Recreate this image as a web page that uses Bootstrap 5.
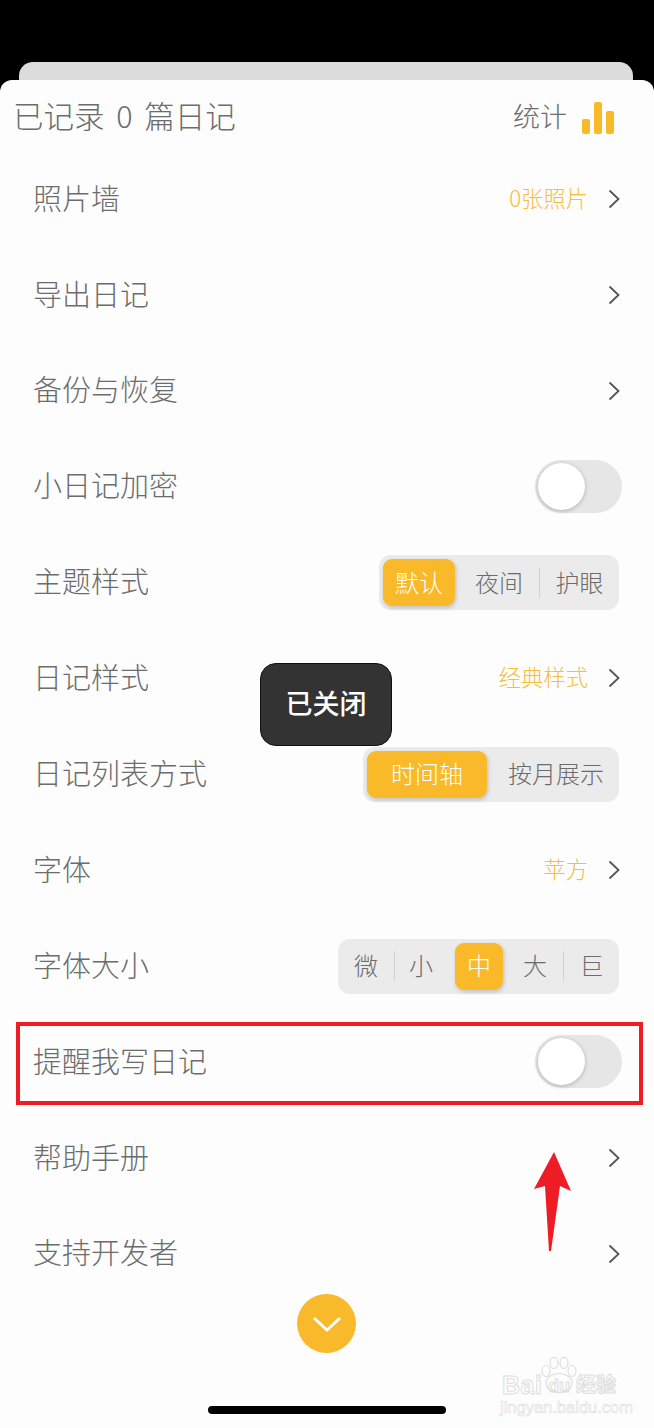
<!DOCTYPE html>
<html lang="zh-CN">
<head>
  <meta charset="UTF-8">
  <title>设置</title>
  <meta name="viewport" content="width=device-width, initial-scale=1">
  <link href="https://cdn.jsdelivr.net/npm/bootstrap@5.3.3/dist/css/bootstrap.min.css" rel="stylesheet">
  <style>
    body {
      background-color: #000;
      font-family: "Noto Sans CJK SC", "Liberation Sans", sans-serif;
      font-weight: 300;
      color: #6c6c6c;
      overflow: hidden;
    }
    .screen {
      position: relative;
      width: 654px;
      height: 1428px;
      padding-top: 62px;
      overflow: hidden;
    }
    .peek-card {
      height: 30px;
      margin: 0 21px -12px 19px;
      background: #dcdcdc;
      border-radius: 14px 14px 0 0;
    }
    .sheet {
      position: relative;
      height: 1348px;
      background: #fdfdfd;
      border-radius: 12px 12px 0 0;
    }
    .sheet-head {
      height: 71px;
      padding: 0 40px 0 13px;
    }
    .head-title { font-size: 30.5px; word-spacing: 5px; }
    .head-stats { font-size: 27px; margin-right: 15px; padding-top: 2px; }
    .stat-bars { height: 32px; gap: 4px; margin-top: 5px; }
    .stat-bars span { width: 8px; background: #f9b928; border-radius: 2px; }
    .bar-a { height: 15px; }
    .bar-b { height: 32px; }
    .bar-c { height: 23px; }
    .set-row {
      height: 95.9px;
      padding: 0 32px 0 33px;
      font-size: 29px;
    }
    .set-label { padding-bottom: 3px; }
    .set-value { font-size: 22.3px; color: #f5bd3a; margin-right: 20px; padding-bottom: 3px; }
    .chev { width: 12px; height: 20px; display: block; margin-right: 2px; }
    .seg {
      height: 55px;
      padding: 4px;
      margin-right: 3px;
      background: #ebebeb;
      border-radius: 12px;
      font-size: 24px;
    }
    .seg-item { height: 100%; padding-bottom: 2px; flex: none; }
    .seg-on {
      background: #f9b928;
      color: #fff;
      border-radius: 9px;
      box-shadow: 1px 2px 4px rgba(0,0,0,.18);
    }
    .sw-72 { width: 72px; }
    .sw-84 { width: 84px; padding-left: 4px; }
    .sw-75 { width: 75px; padding-left: 4px; }
    .sw-120 { width: 120px; }
    .sw-128 { width: 128px; padding-left: 10px; }
    .sw-48 { width: 48px; }
    .sw-52 { width: 52px; padding-right: 4px; }
    .sw-60a { width: 60px; padding-right: 8px; }
    .sw-60b { width: 60px; padding-left: 4px; }
    .sw-51 { width: 51px; padding-left: 4px; }
    .seg-tick { width: 1px; height: 30px; background: #d2d2d2; flex: none; }
    .switch-off {
      width: 87px;
      height: 53px;
      padding: 3px;
      margin-bottom: 1px;
      background: #e6e6e6;
      border-radius: 27px;
    }
    .switch-off i {
      display: block;
      width: 47px;
      height: 47px;
      background: #fff;
      border-radius: 50%;
      box-shadow: 0 1px 4px rgba(0,0,0,.25);
    }
    .toast-box {
      position: absolute;
      left: 260px;
      top: 663px;
      width: 132px;
      height: 83px;
      padding-bottom: 3px;
      background: #333;
      border: 1px solid #111;
      border-radius: 16px;
      color: #fff;
      font-size: 27px;
      font-weight: 500;
    }
    .red-frame {
      position: absolute;
      left: 16px;
      top: 1022px;
      width: 627px;
      height: 83px;
      border: 4px solid #ee1c25;
    }
    .red-arrow { position: absolute; left: 530px; top: 1148px; }
    .down-btn {
      position: absolute;
      left: 297px;
      top: 1294px;
      width: 59px;
      height: 59px;
      background: #f8b92a;
      border-radius: 50%;
    }
    .home-bar {
      position: absolute;
      left: 208px;
      top: 1406px;
      width: 238px;
      height: 8px;
      background: #000;
      border-radius: 4px;
    }
    .mark-box {
      position: absolute;
      left: 500px;
      top: 1355px;
      width: 120px;
      height: 62px;
      color: transparent;
      -webkit-text-stroke: 1px #dedede;
      font-family: "Liberation Sans", "Noto Sans CJK SC", sans-serif;
      font-weight: 700;
      line-height: 1;
    }
    .mark-box svg { position: absolute; left: 41px; top: 2px; }
    .mark-box span { position: absolute; white-space: nowrap; }
    .mark-bai { left: 2px; top: 18px; font-size: 25px; letter-spacing: .5px; }
    .mark-du { left: 48px; top: 22px; font-size: 18px; }
    .mark-zh { left: 76px; top: 20px; font-size: 20px; }
    .mark-sub { left: 0; top: 44px; font-size: 16.5px; font-weight: 400; -webkit-text-stroke: .6px #dedede; }
  </style>
</head>
<body>
  <div class="screen">
    <div class="peek-card"></div>
    <div class="sheet">
      <div class="sheet-head d-flex justify-content-between align-items-center">
        <div class="head-title">已记录 0 篇日记</div>
        <div class="d-flex align-items-center">
          <span class="head-stats">统计</span>
          <div class="stat-bars d-flex align-items-end">
            <span class="bar-a"></span><span class="bar-b"></span><span class="bar-c"></span>
          </div>
        </div>
      </div>

      <div class="set-row d-flex justify-content-between align-items-center">
        <span class="set-label">照片墙</span>
        <div class="d-flex align-items-center"><span class="set-value">0张照片</span>
          <svg class="chev" viewBox="0 0 12 20"><path d="M1.5 1.5 10.5 10 1.5 18.5" fill="none" stroke="#555" stroke-width="1.8"/></svg></div>
      </div>
      <div class="set-row d-flex justify-content-between align-items-center">
        <span class="set-label">导出日记</span>
        <svg class="chev" viewBox="0 0 12 20"><path d="M1.5 1.5 10.5 10 1.5 18.5" fill="none" stroke="#555" stroke-width="1.8"/></svg>
      </div>
      <div class="set-row d-flex justify-content-between align-items-center">
        <span class="set-label">备份与恢复</span>
        <svg class="chev" viewBox="0 0 12 20"><path d="M1.5 1.5 10.5 10 1.5 18.5" fill="none" stroke="#555" stroke-width="1.8"/></svg>
      </div>
      <div class="set-row d-flex justify-content-between align-items-center">
        <span class="set-label">小日记加密</span>
        <div class="switch-off"><i></i></div>
      </div>
      <div class="set-row d-flex justify-content-between align-items-center">
        <span class="set-label">主题样式</span>
        <div class="seg d-flex align-items-center">
          <div class="seg-item seg-on sw-72 d-flex align-items-center justify-content-center">默认</div>
          <div class="seg-item sw-84 d-flex align-items-center justify-content-center">夜间</div>
          <span class="seg-tick"></span>
          <div class="seg-item sw-75 d-flex align-items-center justify-content-center">护眼</div>
        </div>
      </div>
      <div class="set-row d-flex justify-content-between align-items-center">
        <span class="set-label">日记样式</span>
        <div class="d-flex align-items-center"><span class="set-value">经典样式</span>
          <svg class="chev" viewBox="0 0 12 20"><path d="M1.5 1.5 10.5 10 1.5 18.5" fill="none" stroke="#555" stroke-width="1.8"/></svg></div>
      </div>
      <div class="set-row d-flex justify-content-between align-items-center">
        <span class="set-label">日记列表方式</span>
        <div class="seg d-flex align-items-center">
          <div class="seg-item seg-on sw-120 d-flex align-items-center justify-content-center">时间轴</div>
          <div class="seg-item sw-128 d-flex align-items-center justify-content-center">按月展示</div>
        </div>
      </div>
      <div class="set-row d-flex justify-content-between align-items-center">
        <span class="set-label">字体</span>
        <div class="d-flex align-items-center"><span class="set-value">苹方</span>
          <svg class="chev" viewBox="0 0 12 20"><path d="M1.5 1.5 10.5 10 1.5 18.5" fill="none" stroke="#555" stroke-width="1.8"/></svg></div>
      </div>
      <div class="set-row d-flex justify-content-between align-items-center">
        <span class="set-label">字体大小</span>
        <div class="seg d-flex align-items-center">
          <div class="seg-item sw-52 d-flex align-items-center justify-content-center">微</div>
          <span class="seg-tick"></span>
          <div class="seg-item sw-60a d-flex align-items-center justify-content-center">小</div>
          <div class="seg-item seg-on sw-48 d-flex align-items-center justify-content-center">中</div>
          <div class="seg-item sw-60b d-flex align-items-center justify-content-center">大</div>
          <span class="seg-tick"></span>
          <div class="seg-item sw-51 d-flex align-items-center justify-content-center">巨</div>
        </div>
      </div>
      <div class="set-row d-flex justify-content-between align-items-center">
        <span class="set-label">提醒我写日记</span>
        <div class="switch-off"><i></i></div>
      </div>
      <div class="set-row d-flex justify-content-between align-items-center">
        <span class="set-label">帮助手册</span>
        <svg class="chev" viewBox="0 0 12 20"><path d="M1.5 1.5 10.5 10 1.5 18.5" fill="none" stroke="#555" stroke-width="1.8"/></svg>
      </div>
      <div class="set-row d-flex justify-content-between align-items-center">
        <span class="set-label">支持开发者</span>
        <svg class="chev" viewBox="0 0 12 20"><path d="M1.5 1.5 10.5 10 1.5 18.5" fill="none" stroke="#555" stroke-width="1.8"/></svg>
      </div>
    </div>

    <!-- overlays -->
    <div class="toast-box d-flex align-items-center justify-content-center">已关闭</div>
    <div class="red-frame"></div>
    <svg class="red-arrow" width="45" height="106" viewBox="530 1148 45 106">
      <path d="M554 1152 534 1189 545 1186 549 1251 551 1251 560 1186 571 1191Z" fill="#ee1c25"/>
    </svg>
    <div class="down-btn d-flex align-items-center justify-content-center">
      <svg width="30" height="18" viewBox="0 0 30 18"><path d="M2 3 15 15 28 3" fill="none" stroke="#fff" stroke-width="3"/></svg>
    </div>
    <div class="mark-box">
      <svg width="36" height="36" viewBox="0 0 36 36" fill="#fdfdfd" stroke="#dedede" stroke-width="1.2">
        <ellipse cx="5" cy="14" rx="4" ry="5.5"/>
        <ellipse cx="13" cy="6" rx="4" ry="5.5"/>
        <ellipse cx="23" cy="6" rx="4" ry="5.5"/>
        <ellipse cx="31" cy="14" rx="4" ry="5.5"/>
        <ellipse cx="18" cy="26" rx="13" ry="9.5"/>
      </svg>
      <span class="mark-bai">Bai</span>
      <span class="mark-du">du</span>
      <span class="mark-zh">经验</span>
      <span class="mark-sub">jingyan.baidu.com</span>
    </div>
    <div class="home-bar"></div>
  </div>
  <script src="https://cdn.jsdelivr.net/npm/bootstrap@5.3.3/dist/js/bootstrap.bundle.min.js"></script>
</body>
</html>
